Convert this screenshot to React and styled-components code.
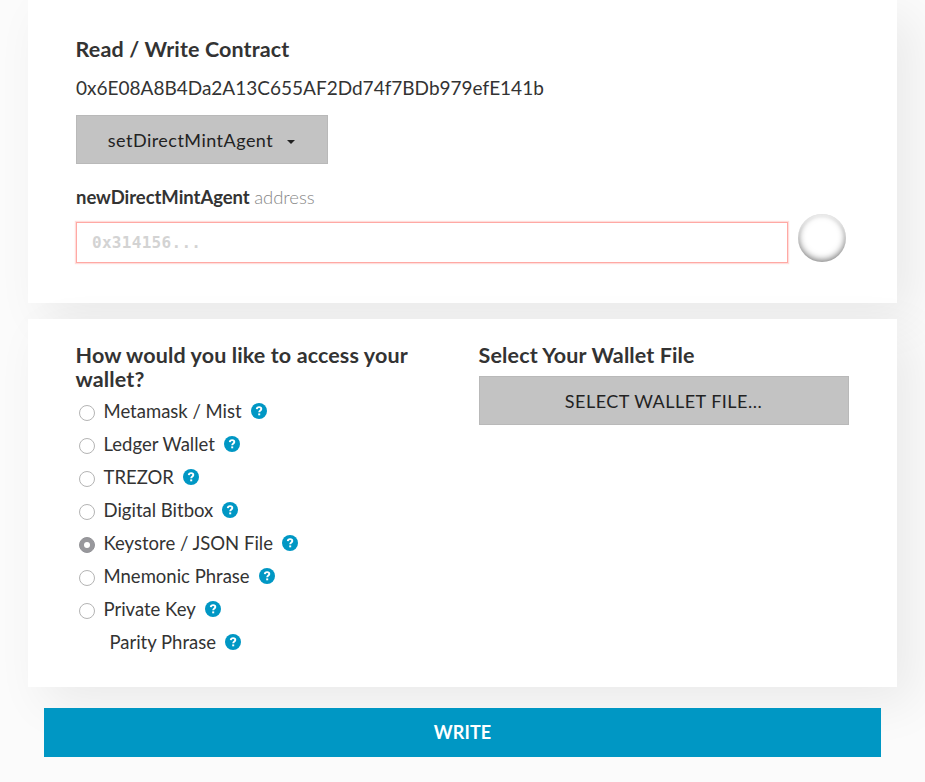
import React from "react";
import styled, { createGlobalStyle } from "styled-components";

const GlobalStyle = createGlobalStyle`
  * { box-sizing: border-box; }
  body {
    margin: 0;
    height: 782px;
    overflow: hidden;
    background: #fbfbfb;
    color: #333;
    font-family: Lato, sans-serif;
    font-size: 18.5px;
    line-height: 24px;
  }
`;

const Page = styled.main`
  display: flex;
  flex-direction: column;
  padding: 0 28px;
  height: 782px;
`;

const Panel = styled.section`
  background: #fff;
  padding: ${(p) => p.$padding};
  height: ${(p) => p.$height}px;
  margin-bottom: ${(p) => p.$gap}px;
  box-shadow: 16px 16px 47px 0 rgba(0, 0, 0, 0.07);
`;

const Title = styled.h4`
  margin: 0 0 0 -0.4px;
  font-size: 21.5px;
  line-height: 24px;
  font-weight: 700;
  letter-spacing: 0.12px;
`;

const Address = styled.p`
  margin: 15px 0;
  font-size: 19px;
`;

const GreyButton = styled.button`
  display: flex;
  align-items: center;
  justify-content: center;
  width: ${(p) => p.$width};
  height: 49px;
  margin-top: ${(p) => p.$top || 0}px;
  padding: 0 1px 0 0;
  border: 1px solid #b9b9b9;
  background: #c3c3c3;
  color: #222;
  font: 400 18px/24px Lato, sans-serif;
  letter-spacing: 0.48px;
`;

const Caret = styled.i`
  margin: 4px 0 0 14px;
  border: 4px solid transparent;
  border-top-color: #222;
  border-bottom: 0;
`;

const FieldLabel = styled.label`
  display: block;
  margin-top: 21px;
  font-weight: 700;
  letter-spacing: -0.05px;
`;

const Hint = styled.small`
  font-size: 18.5px;
  font-weight: 300;
  color: #888;
`;

const FieldRow = styled.div`
  display: flex;
  gap: 10px;
  margin-top: 5px;
`;

const AddressInput = styled.input`
  width: 712px;
  height: 41px;
  margin-top: 8px;
  padding: 0 15px;
  border: 1px solid #ffa9a4;
  border-radius: 0;
  outline: 0;
  box-shadow: 0 0 1px 1px rgba(255, 120, 110, 0.25);
  font: 700 16px/22px "DejaVu Sans Mono", monospace;
  letter-spacing: 0.3px;
  &::placeholder {
    color: #d3d3d3;
    opacity: 1;
  }
`;

const Identicon = styled.div`
  width: 48px;
  height: 48px;
  border-radius: 50%;
  box-shadow: inset rgba(255, 255, 255, 0.5) 0 2px 2px,
    inset rgba(0, 0, 0, 0.55) 0 -1.5px 7px;
`;

const Columns = styled.div`
  display: grid;
  grid-template-columns: 371px 370px;
  column-gap: 32px;
`;

const Options = styled.ul`
  list-style: none;
  margin: 3px 0 0;
  padding: 0 0 0 3px;
`;

const Option = styled.li`
  display: flex;
  align-items: center;
  height: 33px;
  padding-left: ${(p) => (p.$bare ? "30.4px" : "0")};
`;

const Radio = styled.span`
  display: grid;
  place-items: center;
  width: 16px;
  height: 16px;
  margin: 4px 8.5px 0 0;
  border: 1px solid ${(p) => (p.$checked ? "#949498" : "#b4b4b4")};
  border-radius: 50%;
  background: ${(p) => (p.$checked ? "#98989c" : "#fff")};
  &::after {
    content: "";
    width: 6px;
    height: 6px;
    border-radius: 50%;
    background: #fff;
  }
`;

const HelpSvg = styled.svg`
  display: block;
  width: 16px;
  height: 16px;
  margin: 0 0 0 9px;
`;

const Submit = styled.button`
  flex: none;
  width: 837px;
  height: 49px;
  margin-left: 16px;
  padding: 0 0 2px;
  border: 0;
  background: #0097c4;
  color: #fff;
  font: 700 18px/24px Lato, sans-serif;
  letter-spacing: 0.1px;
`;

const Help = () => (
  <HelpSvg viewBox="0 0 16 16" aria-hidden="true">
    <circle cx="8" cy="8" r="8" fill="#0097c4" />
    <path d="M5.8 6.1C5.9 4.8 6.8 4.1 8.1 4.1C9.4 4.1 10.3 4.8 10.3 5.9C10.3 7.5 8.2 7.5 8.2 9.3" fill="none" stroke="#fff" strokeWidth="1.9" />
    <path d="M7.2 10.4H9.2V12.3H7.2Z" fill="#fff" />
  </HelpSvg>
);

const wallets = [
  { name: "Metamask / Mist" },
  { name: "Ledger Wallet" },
  { name: "TREZOR" },
  { name: "Digital Bitbox" },
  { name: "Keystore / JSON File", checked: true },
  { name: "Mnemonic Phrase" },
  { name: "Private Key" },
  { name: "Parity Phrase", bare: true },
];

export default function App() {
  return (
    <>
      <GlobalStyle />
      <Page>
        <Panel $padding="37px 48px 0" $height={303} $gap={16}>
          <Title>Read / Write Contract</Title>
          <Address>0x6E08A8B4Da2A13C655AF2Dd74f7BDb979efE141b</Address>
          <GreyButton $width="252px">
            setDirectMintAgent
            <Caret />
          </GreyButton>
          <FieldLabel>
            newDirectMintAgent <Hint>address</Hint>
          </FieldLabel>
          <FieldRow>
            <AddressInput placeholder="0x314156..." />
            <Identicon />
          </FieldRow>
        </Panel>
        <Panel $padding="24px 48px 0" $height={368} $gap={21}>
          <Columns>
            <div>
              <Title>How would you like to access your wallet?</Title>
              <Options>
                {wallets.map((w) => (
                  <Option key={w.name} $bare={w.bare}>
                    {!w.bare && <Radio $checked={w.checked} />}
                    {w.name}
                    <Help />
                  </Option>
                ))}
              </Options>
            </div>
            <div>
              <Title>Select Your Wallet File</Title>
              <GreyButton $width="370px" $top={9}>
                SELECT WALLET FILE...
              </GreyButton>
            </div>
          </Columns>
        </Panel>
        <Submit>WRITE</Submit>
      </Page>
    </>
  );
}
